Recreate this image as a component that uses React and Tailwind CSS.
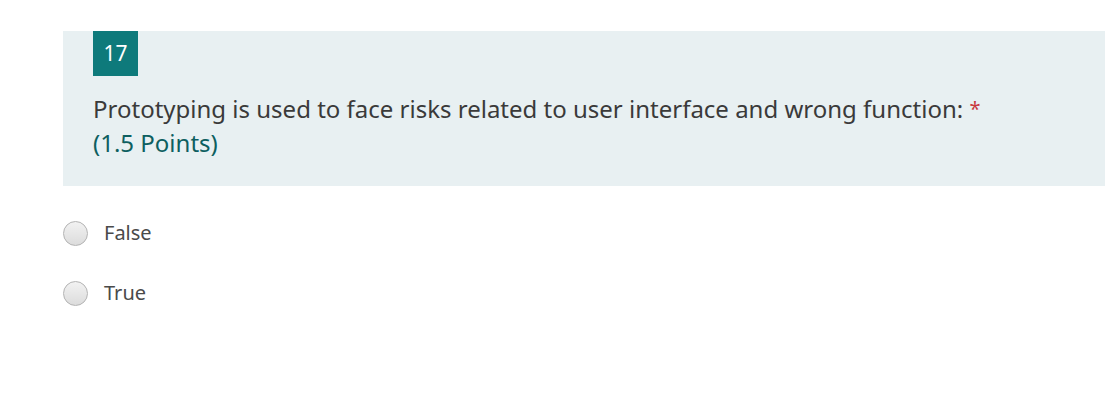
const options = ['False', 'True']

function Radio() {
  return (
    <span className="w-[25px] h-[25px] rounded-full border border-[#b3b3b3] bg-gradient-to-b from-[#f2f2f2] to-[#dcdcdc] shrink-0" />
  )
}

export default function App() {
  return (
    <div className="w-[1105px] h-[403px] bg-white overflow-hidden font-['Segoe_UI','Noto_Sans',sans-serif]">
      <div className="pt-[31px] pl-[63px]">
        {/* Question header */}
        <div className="bg-[#e8f0f2] h-[155px] pl-[30px]">
          <div className="w-[45px] h-[45px] bg-[#0e7a7b] text-white text-[21px] flex items-center justify-center">
            17
          </div>
          <div className="mt-[16px] text-[24px] leading-[34px] text-[#3a3a3a]">
            Prototyping is used to face risks related to user interface and wrong function:{' '}
            <span className="text-[#c83a3f] text-[20px] align-top">*</span>
            <div className="text-[#0d5f60]">(1.5 Points)</div>
          </div>
        </div>

        {/* Options */}
        <div className="mt-[34px] flex flex-col gap-[34px]">
          {options.map(opt => (
            <label key={opt} className="flex items-center gap-[16px] h-[26px]">
              <Radio />
              <span className="text-[20px] text-[#4a4a4a]">{opt}</span>
            </label>
          ))}
        </div>
      </div>
    </div>
  )
}
